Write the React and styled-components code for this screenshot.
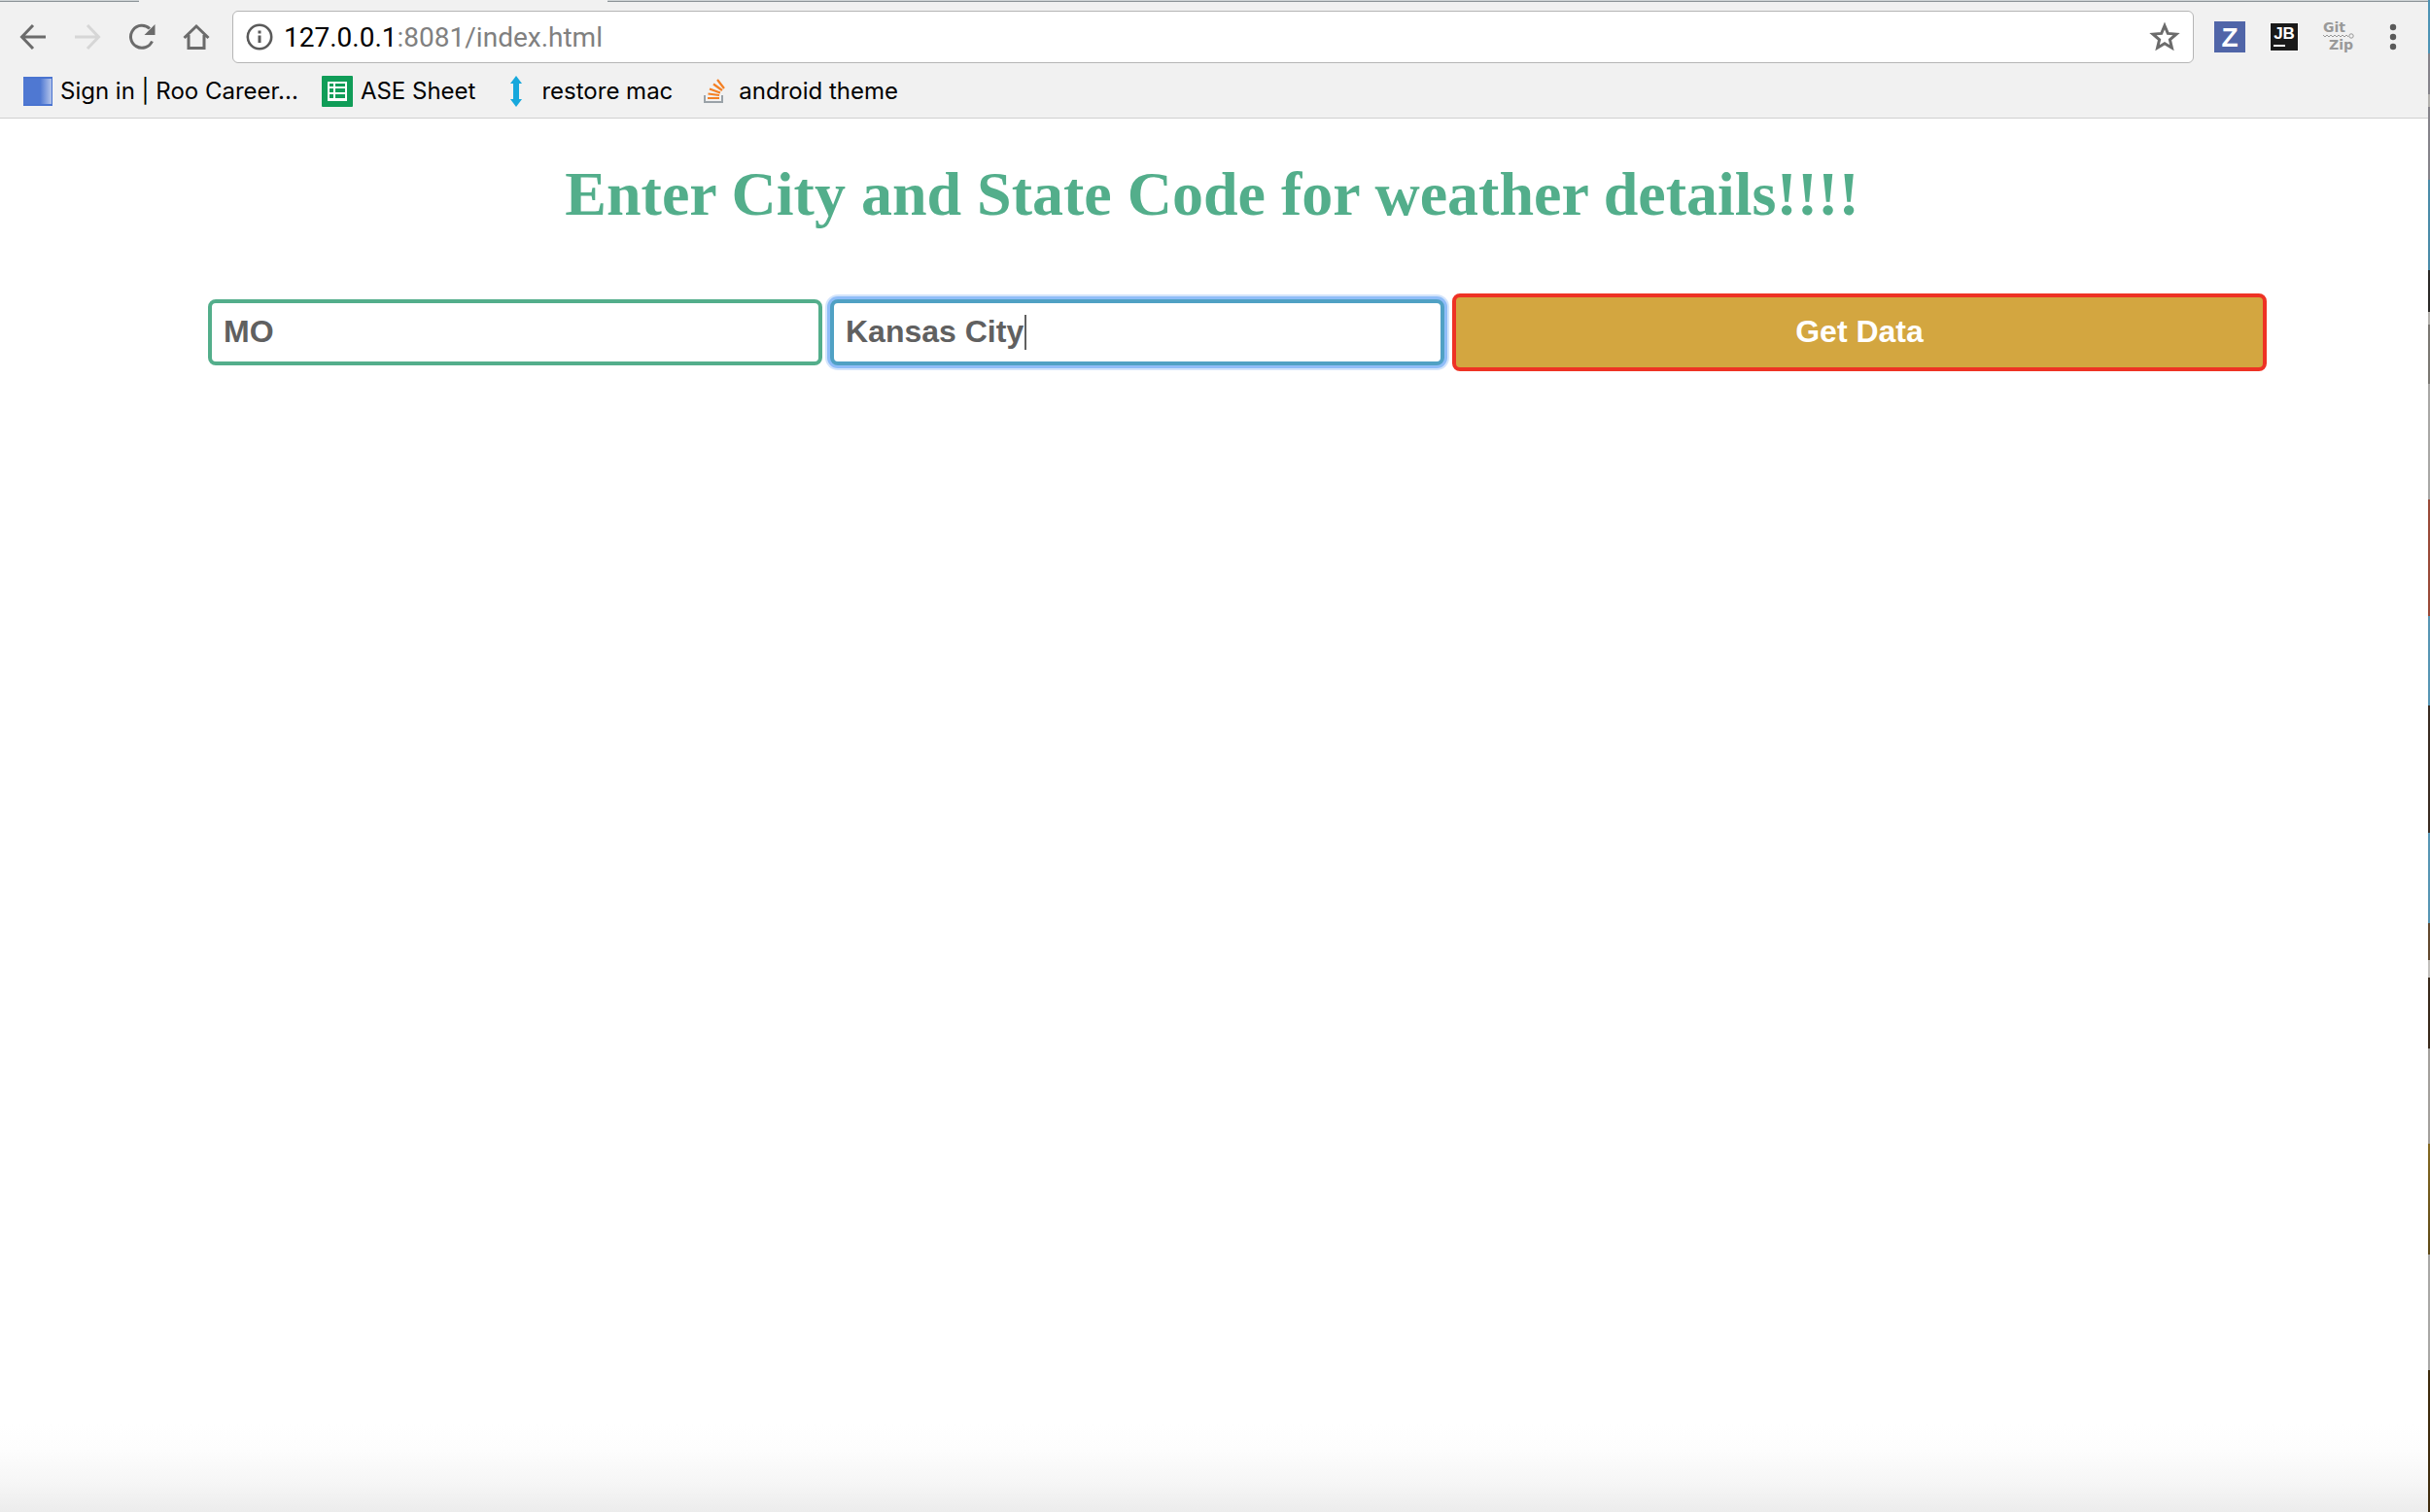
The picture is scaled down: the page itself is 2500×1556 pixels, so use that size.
import React from "react";
import styled, { createGlobalStyle } from "styled-components";

const Global = createGlobalStyle`
  *, *::before, *::after { box-sizing: border-box; }
  body { margin: 0; background: #fff; }
  svg { display: block; overflow: visible; }
`;

const Desktop = styled.div`
  display: flex;
  min-height: 100vh;
  background: #fff;
`;

const Wallpaper = styled.div`
  flex: 0 0 2px;
  background: linear-gradient(
    to bottom,
    #4d93b5 0, #4d93b5 55px,
    #85838a 55px, #85838a 97px,
    #b3b1ad 97px, #b3b1ad 110px,
    #85838a 110px, #85838a 185px,
    #4b8ca9 185px, #4b8ca9 278px,
    #2c2a28 278px, #2c2a28 321px,
    #b3b1ad 321px, #b3b1ad 334px,
    #7b7873 334px, #7b7873 395px,
    #a9a8a6 395px, #a9a8a6 514px,
    #9a4a38 514px, #9a4a38 634px,
    #5796b4 634px, #5796b4 726px,
    #3a2c22 726px, #3a2c22 857px,
    #5796b4 857px, #5796b4 950px,
    #63492f 950px, #63492f 988px,
    #c2c0bc 988px, #c2c0bc 1006px,
    #3a2a1c 1006px, #3a2a1c 1079px,
    #a3a09c 1079px, #a3a09c 1177px,
    #856a22 1177px, #5f4a18 1291px,
    #a9a8a6 1291px, #a9a8a6 1410px,
    #3f2c0e 1410px, #3f2c0e 100%
  );
`;

const Window = styled.div`
  flex: 1;
  display: flex;
  flex-direction: column;
  min-width: 0;
`;

const TabEdges = styled.div`
  display: flex;
  gap: 482px;
  height: 2px;
  background: #f1f1f1;
`;

const TabEdge = styled.span`
  flex: ${(p) => (p.$fill ? "1" : "0 0 143px")};
  background: #cfd4d6;
  border-bottom: 1px solid #8d9498;
`;

const Toolbar = styled.header`
  display: flex;
  align-items: center;
  height: 72px;
  padding: 0 19px 0 17px;
  background: #f1f1f1;
`;

const NavButtons = styled.nav`
  display: flex;
  gap: 22px;
  margin-right: 20px;
`;

const IconButton = styled.button`
  display: grid;
  place-items: center;
  width: 34px;
  height: 34px;
  padding: 0;
  border: 0;
  background: none;
  color: ${(p) => (p.$faded ? "#d6d6d6" : "#6b6b6b")};
`;

const AddressBar = styled.div`
  flex: 1;
  display: flex;
  align-items: center;
  height: 54px;
  padding: 0 12px;
  background: #fff;
  border: 1px solid #b5b5b5;
  border-radius: 6px;
`;

const Url = styled.div`
  flex: 1;
  margin-left: 8px;
  padding-top: 2px;
  color: #808080;
  font: 28px/36px Roboto, sans-serif;
`;

const Host = styled.span`
  color: #000;
`;

const Extensions = styled.div`
  display: flex;
  gap: 22px;
  margin-left: 20px;
`;

const Letter = styled.text`
  font-family: ${(p) => p.$face || "Liberation Sans"}, sans-serif;
  font-weight: 700;
  font-size: ${(p) => p.$size}px;
  fill: ${(p) => p.$color || "#fff"};
`;

const Bookmarks = styled.nav`
  display: flex;
  align-items: center;
  height: 47px;
  padding: 0 24px 8px;
  gap: 24px;
  background: #f1f1f1;
`;

const Divider = styled.div`
  height: 1px;
  background: #cfcfcf;
`;

const Bookmark = styled.a`
  display: flex;
  align-items: center;
  gap: 8px;
  color: #000;
  text-decoration: none;
  white-space: nowrap;
  font: 24px/32px Inter, sans-serif;
`;

const Page = styled.main`
  flex: 1;
  background: linear-gradient(to top, #ececec 0, #f6f6f6 30px, #fdfdfd 64px, #fff 90px);
`;

const Title = styled.h1`
  margin: 40px 0 64px;
  padding-right: 4px;
  color: #53ae8b;
  font: 700 64px/76px "Liberation Serif", serif;
  text-align: center;
`;

const Form = styled.form`
  display: grid;
  grid-template-columns: 632fr 632fr 838fr;
  align-items: center;
  gap: 8px;
  padding: 0 166px 0 214px;
`;

const Field = styled.div`
  position: relative;
`;

const TextInput = styled.input`
  display: block;
  width: 100%;
  height: 68px;
  padding: 0 12px 2px;
  border: 4px solid ${(p) => (p.$active ? "#50a1c4" : "#53ae8b")};
  border-radius: 8px;
  outline: 0;
  box-shadow: ${(p) => (p.$active ? "0 0 0 3px #8fbdf8, 0 0 0 5px #d3e4fb" : "none")};
  background: #fff;
  color: #606060;
  caret-color: transparent;
  font: 700 32px/40px "Liberation Sans", sans-serif;
`;

const Caret = styled.span`
  position: absolute;
  top: 16px;
  left: 200px;
  width: 2px;
  height: 36px;
  background: #606060;
`;

const Submit = styled.button`
  height: 80px;
  padding: 0 0 2px;
  border: 4px solid #ee3224;
  border-radius: 8px;
  background: #d3a640;
  color: #fff;
  font: 700 32px/40px "Liberation Sans", sans-serif;
`;

const Stroke = ({ children, width = 3 }) => (
  <svg width="34" height="34" viewBox="0 0 34 34" fill="none" stroke="currentColor" strokeWidth={width}>
    {children}
  </svg>
);

export default function App() {
  return (
    <Desktop>
      <Global />
      <Window>
        <TabEdges><TabEdge /><TabEdge $fill /></TabEdges>
        <Toolbar>
          <NavButtons aria-label="Navigation">
            <IconButton aria-label="Back">
              <Stroke><path d="M30 17H6M17 5L5.500 17L17 29" /></Stroke>
            </IconButton>
            <IconButton aria-label="Forward" $faded>
              <Stroke><path d="M4 17H28M17 5L28.500 17L17 29" /></Stroke>
            </IconButton>
            <IconButton aria-label="Reload">
              <Stroke><path d="M27.500 21.500A11.500 11.500 0 1 1 25 8.500" /><path d="M30.500 4V15H19.500Z" fill="currentColor" stroke="none" /></Stroke>
            </IconButton>
            <IconButton aria-label="Home">
              <Stroke><path d="M4.500 18L17 6L29.500 18M9 15V28.500H25V15" /></Stroke>
            </IconButton>
          </NavButtons>
          <AddressBar>
            <svg width="32" height="32" viewBox="0 0 32 32" fill="none" stroke="#5a5a5a" strokeWidth="2.600">
              <circle cx="15" cy="16" r="12.200" />
              <path d="M15 14.500V22M15 9.500V12.500" strokeWidth="3" />
            </svg>
            <Url><Host>127.0.0.1</Host>:8081/index.html</Url>
            <IconButton aria-label="Bookmark this page">
              <Stroke><path d="M17 5.500L20.300 13.400L29 14.100L22.400 19.800L24.400 28.200L17 23.700L9.600 28.200L11.600 19.800L5 14.100L13.700 13.400Z" /></Stroke>
            </IconButton>
          </AddressBar>
          <Extensions>
            <IconButton aria-label="Zotero">
              <svg width="32" height="32" viewBox="0 0 32 32">
                <rect width="32" height="32" fill="#5065a8" />
                <Letter x="16" y="26" textAnchor="middle" $size={28}>Z</Letter>
              </svg>
            </IconButton>
            <IconButton aria-label="JetBrains">
              <svg width="32" height="32" viewBox="0 0 32 32">
                <rect x="1" y="1" width="30" height="30" fill="#fff" />
                <rect x="2" y="2" width="28" height="28" fill="#1a1a1a" />
                <Letter x="16" y="18" textAnchor="middle" $size={17}>JB</Letter>
                <rect x="5" y="24" width="12" height="2" fill="#fff" />
              </svg>
            </IconButton>
            <IconButton aria-label="GitZip">
              <svg width="34" height="34" viewBox="0 0 34 34">
                <Letter x="1" y="12" $size={14} $color="#999" $face="DejaVu Sans">Git</Letter>
                <path d="M1 15L3 17L5 15L7 17L9 15L11 17L13 15L15 17L17 15L19 17L21 15L23 17L25 15L27 17" fill="none" stroke="#999" />
                <circle cx="30" cy="16" r="2.200" fill="none" stroke="#999" />
                <Letter x="7" y="30" $size={14} $color="#999" $face="DejaVu Sans">Zip</Letter>
              </svg>
            </IconButton>
            <IconButton aria-label="Menu">
              <svg width="34" height="34" viewBox="0 0 34 34" fill="#5a5a5a">
                <circle cx="17" cy="7" r="3.200" /><circle cx="17" cy="17" r="3.200" /><circle cx="17" cy="27" r="3.200" />
              </svg>
            </IconButton>
          </Extensions>
        </Toolbar>
        <Bookmarks aria-label="Bookmarks">
          <Bookmark href="#roo">
            <svg width="30" height="30" viewBox="0 0 30 30">
              <defs><linearGradient id="roo"><stop offset="0.600" stopColor="#4f78d2" /><stop offset="0.950" stopColor="#a9bce8" /></linearGradient></defs>
              <rect width="30" height="30" fill="#4a74d0" />
              <rect y="2" width="29" height="26" fill="url(#roo)" />
            </svg>
            Sign in | Roo Career...
          </Bookmark>
          <Bookmark href="#ase">
            <svg width="32" height="32" viewBox="0 0 32 32">
              <rect width="32" height="32" rx="1" fill="#109d58" />
              <path d="M6 6H26V26H6Z M8 8V11H12V8Z M14 8V11H24V8Z M8 13V17H12V13Z M14 13V17H24V13Z M8 19V23H12V19Z M14 19V23H24V19Z" fill="#fff" fillRule="evenodd" />
            </svg>
            ASE Sheet
          </Bookmark>
          <Bookmark href="#restore">
            <svg width="36" height="32" viewBox="0 0 36 32">
              <path d="M18 0L24 8H21V24H24L18 32L12 24H15V8H12Z" fill="#17a8dc" />
            </svg>
            restore mac
          </Bookmark>
          <Bookmark href="#android">
            <svg width="36" height="32" viewBox="0 0 36 32" fill="none">
              <path d="M9 20V27H27V20" stroke="#9aa2a8" strokeWidth="2" />
              <path d="M12 23H24M12.500 18.500L24 20M14 13.500L25 17.500M18 8.500L27 15M22 4L29 13" stroke="#f48024" strokeWidth="2.200" />
            </svg>
            android theme
          </Bookmark>
        </Bookmarks>
        <Divider />
        <Page>
          <Title>Enter City and State Code for weather details!!!!</Title>
          <Form>
            <Field><TextInput aria-label="State code" defaultValue="MO" /></Field>
            <Field><TextInput aria-label="City" defaultValue="Kansas City" $active /><Caret /></Field>
            <Submit type="button">Get Data</Submit>
          </Form>
        </Page>
      </Window>
      <Wallpaper />
    </Desktop>
  );
}
